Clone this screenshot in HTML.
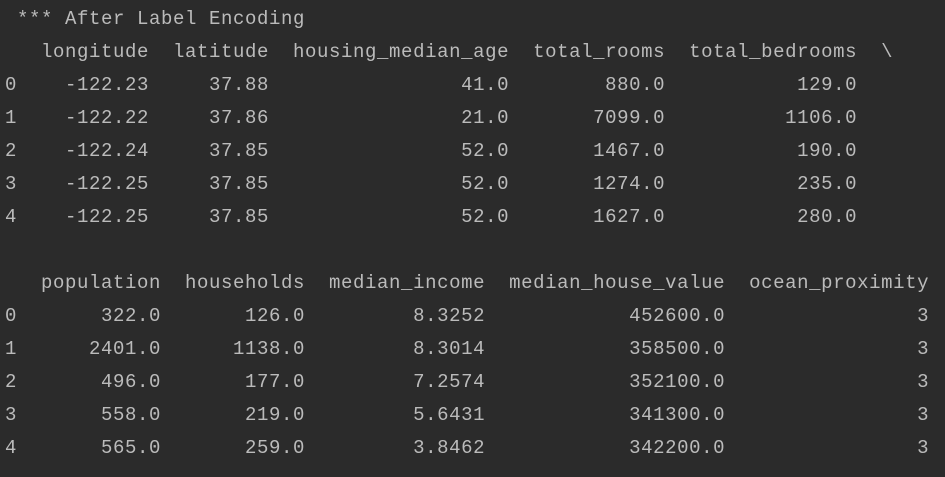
<!DOCTYPE html>
<html><head><meta charset="utf-8"><style>
html,body{margin:0;padding:0;background:#2b2b2b;width:945px;height:477px;overflow:hidden}
pre{margin:0;position:absolute;left:5px;top:3px;font-family:"Liberation Mono","DejaVu Sans Mono",monospace;font-size:19px;letter-spacing:0.6px;line-height:33px;color:#bbbbbb}
</style></head><body>
<pre> *** After Label Encoding
   longitude  latitude  housing_median_age  total_rooms  total_bedrooms  \
0    -122.23     37.88                41.0        880.0           129.0   
1    -122.22     37.86                21.0       7099.0          1106.0   
2    -122.24     37.85                52.0       1467.0           190.0   
3    -122.25     37.85                52.0       1274.0           235.0   
4    -122.25     37.85                52.0       1627.0           280.0   

   population  households  median_income  median_house_value  ocean_proximity
0       322.0       126.0         8.3252            452600.0                3
1      2401.0      1138.0         8.3014            358500.0                3
2       496.0       177.0         7.2574            352100.0                3
3       558.0       219.0         5.6431            341300.0                3
4       565.0       259.0         3.8462            342200.0                3</pre>
</body></html>
